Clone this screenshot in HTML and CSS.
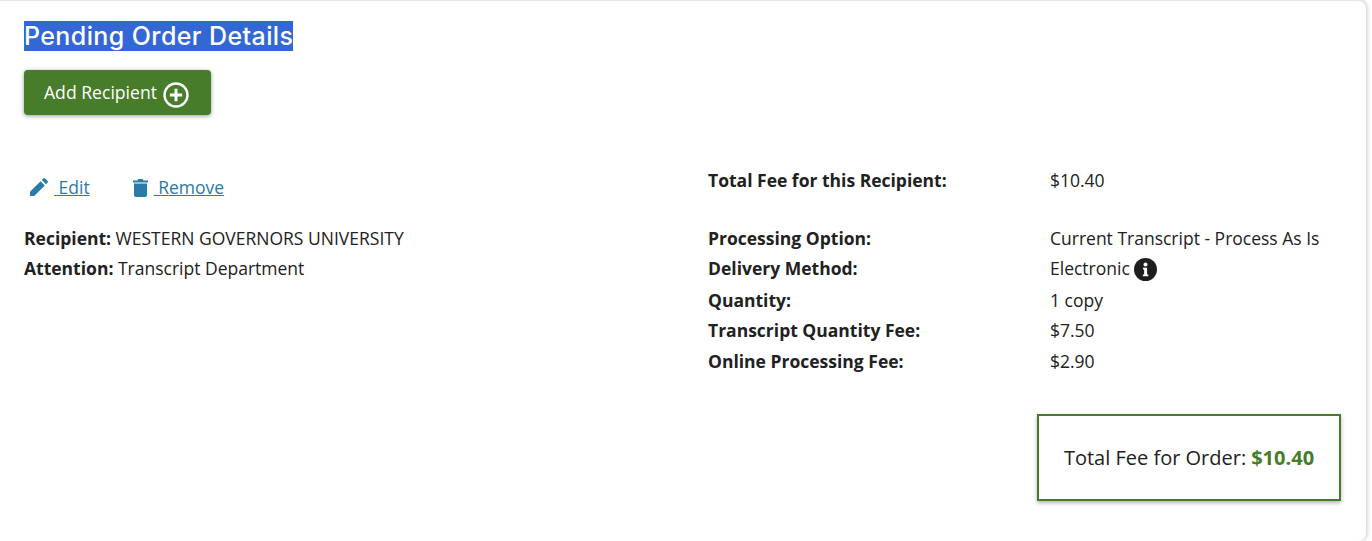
FILE: index.html
```html
<!DOCTYPE html>
<html>
  <head>
    <title>Pending Order Details</title>
    <link rel="stylesheet" href="styles.css">
  </head>
  <body>
    <div class="card">
      <h2 class="title"><span class="selected">Pending Order Details</span></h2>
      <button class="add-btn">Add Recipient
        <svg class="plus" viewBox="0 0 26 26" width="26" height="26">
          <circle cx="13" cy="13" r="11.5" fill="none" stroke="#fff" stroke-width="2.4"/>
          <path d="M13 6.8v12.4M6.8 13h12.4" stroke="#fff" stroke-width="3" fill="none"/>
        </svg>
      </button>

      <div class="columns">
        <div class="left">
          <div class="actions">
            <a class="action" href="#">
              <svg viewBox="0 0 18 18" width="18" height="18"><path d="M0 18v-4.2L10.6 3.2l4.2 4.2L4.2 18zM11.8 2l1.6-1.6a1.2 1.2 0 0 1 1.7 0l2.5 2.5a1.2 1.2 0 0 1 0 1.7L16 6.2z" fill="#2a7ba8"/></svg>
              <span class="link">&nbsp;Edit</span>
            </a>
            <a class="action" href="#">
              <svg viewBox="0 0 15 19" width="15" height="19"><path d="M0 2.500h4.500L5.400 1h4.200l.9 1.500H15v2H0zM1 5.500h13V17a2 2 0 0 1-2 2H3a2 2 0 0 1-2-2z" fill="#2a7ba8"/></svg>
              <span class="link">&nbsp;Remove</span>
            </a>
          </div>
          <div class="row"><b>Recipient:</b> WESTERN GOVERNORS UNIVERSITY</div>
          <div class="row"><b>Attention:</b> Transcript Department</div>
        </div>

        <div class="right">
          <div class="fees total-line">
            <b>Total Fee for this Recipient:</b><span>$10.40</span>
          </div>
          <div class="fees detail-rows">
            <b>Processing Option:</b><span>Current Transcript - Process As Is</span>
            <b>Delivery Method:</b>
            <span class="with-icon">Electronic
              <svg class="info" viewBox="0 0 22 22" width="23" height="23">
                <circle cx="11" cy="11" r="11" fill="#1e1e1e"/>
                <circle cx="11" cy="6.2" r="1.9" fill="#fff"/>
                <path d="M8.600 9.300h3.900v6.400h1.200v1.800H8.500v-1.800h1.200v-4.600H8.600z" fill="#fff"/>
              </svg>
            </span>
            <b>Quantity:</b><span>1 copy</span>
            <b>Transcript Quantity Fee:</b><span>$7.50</span>
            <b>Online Processing Fee:</b><span>$2.90</span>
          </div>
        </div>
      </div>

      <div class="order-row">
        <div class="order-total">Total Fee for Order: <b>$10.40</b></div>
      </div>
    </div>
  </body>
</html>
```

FILE: styles.css
```css
html, body { height: 100%; }
body { margin: 0; background: #fff; color: #212121; font: 400 17.5px/30px "Open Sans", sans-serif; overflow: hidden; }
b { font-weight: 700; }

.card { box-sizing: border-box; width: 1366px; height: 100%; padding: 20px 25px 0 24px; background: #fff; border-top: 1px solid #e6e6e6; border-radius: 0 8px 8px 0; box-shadow: 1px 0 4px rgba(0,0,0,.22); }
.title { margin: 0; font: 500 25px/30px Inter, sans-serif; letter-spacing: .4px; }
.selected { display: inline-block; background: #3367d6; color: #fff; }

.add-btn { display: flex; align-items: center; gap: 6px; margin-top: 19px; height: 45px; padding: 0 22px 2px 20px; border: 0; border-radius: 4px; background: #467c2a; color: #fff; font: 500 17.6px "Open Sans", sans-serif; box-shadow: 0 1px 4px rgba(0,0,0,.4); }
.plus { margin-top: 7px; }

.columns { display: grid; grid-template-columns: 684px 1fr; margin-top: 50px; }
.actions { display: flex; gap: 42px; padding: 7px 0 0 6px; margin-bottom: 21px; }
.action { display: flex; align-items: center; gap: 6px; color: #2a7ba8; text-decoration: none; }
.link { text-decoration: underline; }
.action + .action { margin-left: 1px; }
.row { height: 30px; }

.fees { display: grid; grid-template-columns: 342px 1fr; grid-auto-rows: 30.5px; }
.total-line { margin-bottom: 27px; }
.detail-rows { grid-template-rows: 30px 32px 30px 31px 30px; }
.with-icon { display: flex; align-items: flex-start; gap: 4px; }
.info { margin-top: 5px; }

.order-row { display: flex; justify-content: flex-end; margin-top: 38px; }
.order-total { box-sizing: border-box; width: 304px; height: 87px; padding-top: 1px; display: flex; align-items: center; justify-content: center; gap: 5px; border: 2px solid #467c2a; font-size: 20px; box-shadow: 0 2px 4px rgba(0,0,0,.3); }
.order-total b { color: #467c2a; }
```
